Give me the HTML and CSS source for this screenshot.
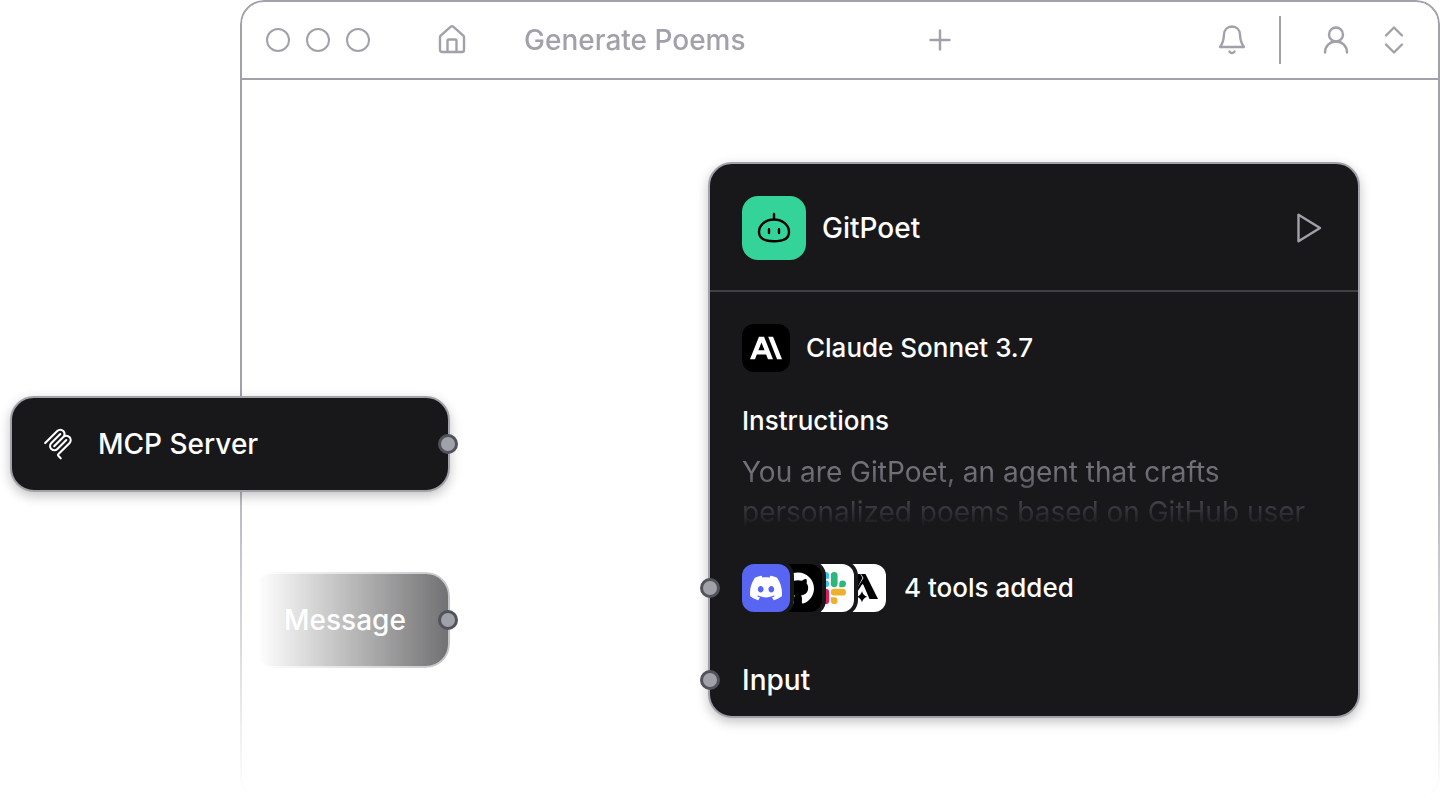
FILE: index.html
```html
<!DOCTYPE html>
<html lang="en">
<head>
<meta charset="utf-8">
<meta name="viewport" content="width=device-width, initial-scale=1">
<title>Generate Poems</title>
<link rel="stylesheet" href="styles.css">
</head>
<body>
<main class="stage">
  <section class="window">
    <header class="bar">
      <div class="lights"><span class="light"></span><span class="light"></span><span class="light"></span></div>
      <button class="tool home" type="button" aria-label="Home">
        <svg viewBox="0 0 32 32"><path d="M4 13.2a2 2 0 0 1 .7-1.5L14.8 2.7a1.8 1.8 0 0 1 2.4 0l10.100 9a2 2 0 0 1 .7 1.500V26a2 2 0 0 1-2 2H6a2 2 0 0 1-2-2zM11.500 28V17a1.500 1.500 0 0 1 1.500-1.500h6a1.500 1.500 0 0 1 1.500 1.500v11"/></svg>
      </button>
      <h1 class="title">Generate Poems</h1>
      <button class="tool add" type="button" aria-label="New tab">
        <svg viewBox="0 0 32 32"><path d="M16 6.500v19M6.500 16h19"/></svg>
      </button>
      <button class="tool bell" type="button" aria-label="Notifications">
        <svg viewBox="0 0 32 32"><path d="M16 2.500c-4.700 0-7.800 3.400-8 8-.2 6-1.200 8.800-3.900 12.500h23.800c-2.700-3.700-3.700-6.500-3.900-12.500-.2-4.600-3.300-8-8-8zM13.500 27.600c1.200 1.900 3.800 1.900 5 0"/></svg>
      </button>
      <span class="divider"></span>
      <button class="account" type="button" aria-label="Account">
        <svg class="icon" viewBox="0 0 32 32"><circle cx="16" cy="10.500" r="7"/><path d="M5 28.500c0-6.500 4.700-11 11-11s11 4.500 11 11"/></svg>
        <svg class="icon" viewBox="0 0 32 32"><path d="M8 11.500l8-8 8 8M8 20.500l8 8 8-8"/></svg>
      </button>
    </header>
  </section>

  <article class="node mcp">
    <svg class="mcp-logo" viewBox="0 0 180 180"><path d="M18 84.850 85.880 16.970C95.250 7.600 110.450 7.600 119.820 16.970 129.200 26.340 129.200 41.540 119.820 50.910L68.560 102.180M69.270 101.470 119.820 50.910C129.200 41.540 144.390 41.540 153.770 50.910L154.120 51.270C163.490 60.640 163.490 75.830 154.120 85.210L92.720 146.600C89.600 149.720 89.600 154.790 92.720 157.910L105.330 170.520M102.850 33.940 52.650 84.150C43.280 93.520 43.280 108.710 52.650 118.090 62.020 127.460 77.220 127.460 86.590 118.090L136.790 67.880"/></svg>
    <span>MCP Server</span>
    <span class="port port-out"></span>
  </article>

  <article class="node message">
    <span class="message-text">Message</span>
    <span class="port port-out"></span>
  </article>

  <article class="card">
    <header class="card-head">
      <span class="avatar"><svg viewBox="0 0 64 64"><path d="M32 18v5M32 23.500c8.500 0 15 5.600 15 12.500 0 6.200-5.400 9.300-15 9.300S17 42.200 17 36c0-6.900 6.500-12.500 15-12.500zM27 33.300v3.800M37 33.300v3.800"/></svg></span>
      <h2 class="card-title">GitPoet</h2>
      <button class="play" type="button" aria-label="Run">
        <svg viewBox="0 0 32 32"><path d="M4.500 2.700v26.600L26 16z"/></svg>
      </button>
    </header>
    <div class="card-body">
      <div class="model">
        <span class="model-logo"><svg viewBox="0 0 24 24"><path d="M17.304 3.541h-3.672l6.696 16.918H24Zm-10.608 0L0 20.459h3.744l1.370-3.553h7.005l1.369 3.553h3.744L10.536 3.541Zm-.371 10.223 2.291-5.945 2.292 5.945Z"/></svg></span>
        <span>Claude Sonnet 3.7</span>
      </div>
      <h3 class="label">Instructions</h3>
      <p class="prompt">You are GitPoet, an agent that crafts personalized poems based on GitHub user</p>
      <div class="row tools">
        <span class="port port-in"></span>
        <span class="stack">
          <span class="app discord"><svg viewBox="0 0 24 24"><path d="M20.317 4.3698a19.7913 19.7913 0 00-4.8851-1.5152.0741.0741 0 00-.0785.0371c-.211.3753-.4447.8648-.6083 1.2495-1.8447-.2762-3.68-.2762-5.4868 0-.1636-.3933-.4058-.8742-.6177-1.2495a.077.077 0 00-.0785-.037 19.7363 19.7363 0 00-4.8852 1.515.0699.0699 0 00-.0321.0277C.5334 9.0458-.319 13.5799.0992 18.0578a.0824.0824 0 00.0312.0561c2.0528 1.5076 4.0413 2.4228 5.9929 3.0294a.0777.0777 0 00.0842-.0276c.4616-.6304.8731-1.2952 1.226-1.9942a.076.076 0 00-.0416-.1057c-.6528-.2476-1.2743-.5495-1.8722-.8923a.077.077 0 01-.0076-.1277c.1258-.0943.2517-.1923.3718-.2914a.0743.0743 0 01.0776-.0105c3.9278 1.7933 8.18 1.7933 12.0614 0a.0739.0739 0 01.0785.0095c.1202.099.246.1981.3728.2924a.077.077 0 01-.0066.1276 12.2986 12.2986 0 01-1.873.8914.0766.0766 0 00-.0407.1067c.3604.698.7719 1.3628 1.225 1.9932a.076.076 0 00.0842.0286c1.961-.6067 3.9495-1.5219 6.0023-3.0294a.077.077 0 00.0313-.0552c.5004-5.177-.8382-9.6739-3.5485-13.6604a.061.061 0 00-.0312-.0286zM8.02 15.3312c-1.1825 0-2.1569-1.0857-2.1569-2.419 0-1.3332.9555-2.4189 2.157-2.4189 1.2108 0 2.1757 1.0952 2.1568 2.419 0 1.3332-.9555 2.4189-2.1569 2.4189zm7.9748 0c-1.1825 0-2.1569-1.0857-2.1569-2.419 0-1.3332.9554-2.4189 2.1569-2.4189 1.2108 0 2.1757 1.0952 2.1568 2.419 0 1.3332-.946 2.4189-2.1568 2.4189Z"/></svg></span>
          <span class="app github"><svg viewBox="0 0 24 24"><path d="M12 .297c-6.63 0-12 5.373-12 12 0 5.303 3.438 9.8 8.205 11.385.6.113.82-.258.82-.577 0-.285-.01-1.04-.015-2.04-3.338.724-4.042-1.61-4.042-1.61C4.422 18.07 3.633 17.7 3.633 17.7c-1.087-.744.084-.729.084-.729 1.205.084 1.838 1.236 1.838 1.236 1.07 1.835 2.809 1.305 3.495.998.108-.776.417-1.305.76-1.605-2.665-.3-5.466-1.332-5.466-5.93 0-1.31.465-2.38 1.235-3.22-.135-.303-.54-1.523.105-3.176 0 0 1.005-.322 3.3 1.23.96-.267 1.98-.399 3-.405 1.02.006 2.04.138 3 .405 2.28-1.552 3.285-1.23 3.285-1.23.645 1.653.24 2.873.12 3.176.765.84 1.23 1.91 1.23 3.22 0 4.61-2.805 5.625-5.475 5.92.42.36.81 1.096.81 2.22 0 1.606-.015 2.896-.015 3.286 0 .315.21.69.825.57C20.565 22.092 24 17.592 24 12.297c0-6.627-5.373-12-12-12"/></svg></span>
          <span class="app slack"><svg viewBox="0 0 24 24"><path fill="#E01E5A" d="M5.042 15.165a2.528 2.528 0 0 1-2.520 2.523A2.528 2.528 0 0 1 0 15.165a2.527 2.527 0 0 1 2.522-2.520h2.520zM6.313 15.165a2.527 2.527 0 0 1 2.521-2.520 2.527 2.527 0 0 1 2.521 2.520v6.313A2.528 2.528 0 0 1 8.834 24a2.528 2.528 0 0 1-2.521-2.522z"/><path fill="#36C5F0" d="M8.834 5.042a2.528 2.528 0 0 1-2.521-2.520A2.528 2.528 0 0 1 8.834 0a2.528 2.528 0 0 1 2.521 2.522v2.520zM8.834 6.313a2.528 2.528 0 0 1 2.521 2.521 2.528 2.528 0 0 1-2.521 2.521H2.522A2.528 2.528 0 0 1 0 8.834a2.528 2.528 0 0 1 2.522-2.521z"/><path fill="#2EB67D" d="M18.956 8.834a2.528 2.528 0 0 1 2.522-2.521A2.528 2.528 0 0 1 24 8.834a2.528 2.528 0 0 1-2.522 2.521h-2.522zM17.688 8.834a2.528 2.528 0 0 1-2.523 2.521 2.527 2.527 0 0 1-2.520-2.521V2.522A2.527 2.527 0 0 1 15.165 0a2.528 2.528 0 0 1 2.523 2.522z"/><path fill="#ECB22E" d="M15.165 18.956a2.528 2.528 0 0 1 2.523 2.522A2.528 2.528 0 0 1 15.165 24a2.527 2.527 0 0 1-2.520-2.522v-2.522zM15.165 17.688a2.527 2.527 0 0 1-2.520-2.523 2.526 2.526 0 0 1 2.520-2.520h6.313A2.527 2.527 0 0 1 24 15.165a2.528 2.528 0 0 1-2.522 2.523z"/></svg></span>
          <span class="app agent"><svg viewBox="0 0 32 32"><path d="M12 2h2.500L16.500 6 9 20V2zM15 2h4.500L32 27h-8.500L17.500 13l-1.200-1L11.500 19.500H9L17.500 6zM16 19.200q1.200 4.300 5.200 5.500-4 1.200-5.200 5.500-1.200-4.300-5.200-5.500 4-1.200 5.200-5.500z"/></svg></span>
        </span>
        <span>4 tools added</span>
      </div>
      <div class="row input">
        <span class="port port-in"></span>
        <span>Input</span>
      </div>
    </div>
  </article>
</main>
</body>
</html>
```
FILE: styles.css
```css
* { box-sizing: border-box; }
body {
  margin: 0;
  background: #fff;
  color: #fff;
  font-family: Inter, "Liberation Sans", sans-serif;
  font-size: 28px;
  line-height: 40px;
}
h1, h2, h3, p { margin: 0; }
h1, h2, h3 { font-size: inherit; font-weight: inherit; }
svg { display: block; }
button { border: 0; padding: 0; background: none; color: inherit; cursor: pointer; }

.stage { position: relative; min-height: 100vh; overflow: hidden; }

.window {
  margin-left: 240px;
  height: 800px;
  border: 2px solid #a1a1aa;
  border-radius: 24px;
  mask-image: linear-gradient(#000 50%, transparent);
}
.bar {
  display: flex;
  align-items: center;
  height: 78px;
  padding: 0 28px 0 24px;
  border-bottom: 2px solid #a1a1aa;
  color: #a1a1aa;
}
.lights { display: flex; gap: 16px; }
.light { width: 24px; height: 24px; border: 2px solid #a1a1aa; border-radius: 50%; }
.tool svg, .icon, .play svg {
  width: 32px;
  height: 32px;
  fill: none;
  stroke: #a1a1aa;
  stroke-width: 2.4;
  stroke-linecap: round;
  stroke-linejoin: round;
}
.home { margin-left: 66px; }
.title { margin-left: 56px; width: 400px; font-weight: 500; }
.bell { margin-left: auto; }
.divider { width: 2px; height: 48px; margin: 0 39px 0 31px; background: #a1a1aa; }
.account { display: flex; gap: 26px; }

.node {
  position: absolute;
  display: flex;
  align-items: center;
  height: 96px;
  padding: 0 32px;
  border: 2px solid #a1a1aa;
  border-radius: 24px;
  font-weight: 450;
}
.mcp {
  left: 10px;
  top: 396px;
  width: 440px;
  gap: 24px;
  padding-left: 30px;
  background: #18181b;
  box-shadow: 0 4px 12px rgb(0 0 0 / 24%);
}
.mcp-logo { width: 32px; height: 32px; fill: none; stroke: #fff; stroke-width: 12; stroke-linecap: round; }
.message {
  left: 250px;
  top: 572px;
  width: 200px;
  border-color: transparent;
}
.message::before {
  content: "";
  position: absolute;
  inset: -2px;
  border: 2px solid #a1a1aa;
  border-radius: 24px;
  background: #18181b;
  mask-image: linear-gradient(90deg, transparent 4%, rgb(0 0 0 / 62%));
}
.message-text { position: relative; }

.port {
  position: absolute;
  top: 50%;
  width: 20px;
  height: 20px;
  margin-top: -10px;
  border: 3px solid #52525b;
  border-radius: 50%;
  background: #a1a1aa;
}
.port-out { right: -10px; }
.port-in { left: -42px; }

.card {
  position: absolute;
  top: 162px;
  right: 80px;
  width: 652px;
  border: 2px solid #a1a1aa;
  border-radius: 24px;
  background: #18181b;
  font-weight: 500;
  box-shadow: 0 4px 12px rgb(0 0 0 / 24%);
}
.card-head {
  display: flex;
  align-items: center;
  gap: 16px;
  padding: 32px 32px 30px;
  border-bottom: 2px solid #3f3f46;
}
.avatar { width: 64px; height: 64px; border-radius: 16px; background: #34d399; }
.avatar svg { fill: none; stroke: #000; stroke-width: 2.4; stroke-linecap: round; }
.play { margin-left: auto; }
.card-body { padding: 32px 32px 16px; font-size: 26px; }
.model { display: flex; align-items: center; gap: 16px; height: 48px; }
.model-logo {
  display: grid;
  place-items: center;
  width: 48px;
  height: 48px;
  border-radius: 12px;
  background: #000;
}
.model-logo svg { width: 32px; height: 32px; fill: #fff; }
.label { margin-top: 29px; }
.prompt {
  margin-top: 11px;
  color: #71717a;
  font-size: 28px;
  font-weight: 400;
  mask-image: linear-gradient(#000 25%, transparent 95%);
}
.row { position: relative; display: flex; align-items: center; height: 48px; }
.tools { gap: 18px; margin-top: 32px; }
.input { height: 40px; margin-top: 48px; font-size: 28px; }
.stack { display: flex; }
.app {
  position: relative;
  display: grid;
  place-items: center;
  width: 48px;
  height: 48px;
  border-radius: 12px;
  background: #fff;
  box-shadow: 0 0 0 4px #18181b;
}
.app + .app { margin-left: -16px; }
.app svg { width: 32px; height: 32px; }
.discord { z-index: 4; background: #5865f2; }
.discord svg, .github svg { fill: #fff; }
.github { z-index: 3; background: #000; }
.slack { z-index: 2; }
.agent { z-index: 1; }
```
